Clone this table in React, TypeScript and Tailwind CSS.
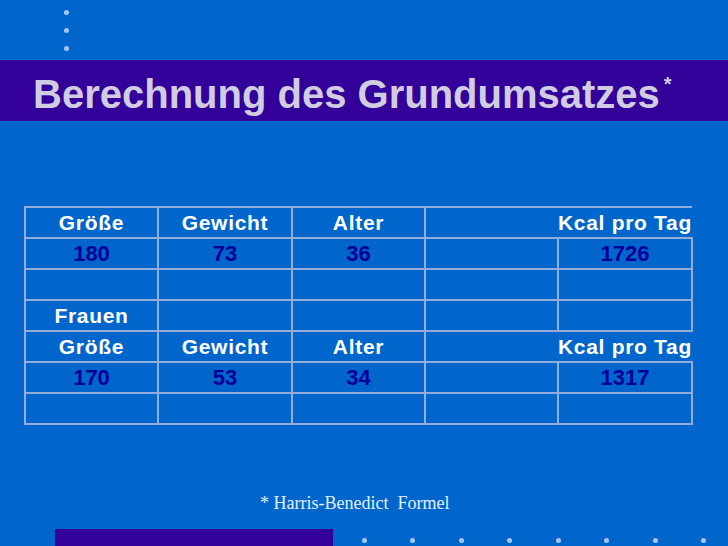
import React from "react";

const headCell =
  "border-2 border-[#93acd9] text-white font-bold text-[21px] tracking-[0.7px] leading-[27px] text-center p-0 whitespace-nowrap";
const valCell =
  "border-2 border-[#93acd9] text-[#000099] font-bold text-[22px] leading-[27px] text-center p-0";
const emptyCell = "border-2 border-[#93acd9] p-0";

function HeaderRow() {
  return (
    <tr className="h-[31px]">
      <td className={headCell}>Größe</td>
      <td className={headCell}>Gewicht</td>
      <td className={headCell}>Alter</td>
      <td colSpan={2} className={headCell + " !text-right !border-r-0"}>
        Kcal pro Tag
      </td>
    </tr>
  );
}

function ValueRow({ a, b, c, d }: { a: string; b: string; c: string; d: string }) {
  return (
    <tr className="h-[31px]">
      <td className={valCell}>{a}</td>
      <td className={valCell}>{b}</td>
      <td className={valCell}>{c}</td>
      <td className={emptyCell}></td>
      <td className={valCell}>{d}</td>
    </tr>
  );
}

function EmptyRow({ first }: { first?: string }) {
  return (
    <tr className="h-[31px]">
      <td className={first ? headCell : emptyCell}>{first}</td>
      <td className={emptyCell}></td>
      <td className={emptyCell}></td>
      <td className={emptyCell}></td>
      <td className={emptyCell}></td>
    </tr>
  );
}

export default function App() {
  return (
    <div
      className="w-[728px] h-[546px] bg-[#0066cc] overflow-hidden flex flex-col"
      style={{ fontFamily: '"Liberation Sans", Arial, sans-serif' }}
    >
      {/* top dots */}
      <div className="h-[60px] shrink-0 flex flex-col items-start pl-[63.5px] pt-[9.5px] gap-[13px]">
        <div className="w-[5px] h-[5px] rounded-full bg-[#a6c6ef]" />
        <div className="w-[5px] h-[5px] rounded-full bg-[#a6c6ef]" />
        <div className="w-[5px] h-[5px] rounded-full bg-[#a6c6ef]" />
      </div>

      {/* title band */}
      <div className="h-[61px] shrink-0 bg-[#330099] pl-[33px] pt-[7px] overflow-hidden">
        <h1 className="text-[40px] leading-[54px] font-bold text-[#d0cde2] whitespace-nowrap">
          Berechnung des Grundumsatzes
          <span className="text-[20px] leading-[0px] ml-[4px] align-[17px]">*</span>
        </h1>
      </div>

      {/* table */}
      <div className="pl-[24px] pt-[85px] shrink-0">
        <table className="table-fixed border-collapse w-[667px]">
          <colgroup>
            <col className="w-[133px]" />
            <col className="w-[134px]" />
            <col className="w-[133px]" />
            <col className="w-[133px]" />
            <col className="w-[134px]" />
          </colgroup>
          <tbody>
            <HeaderRow />
            <ValueRow a="180" b="73" c="36" d="1726" />
            <EmptyRow />
            <EmptyRow first="Frauen" />
            <HeaderRow />
            <ValueRow a="170" b="53" c="34" d="1317" />
            <EmptyRow />
          </tbody>
        </table>
      </div>

      {/* footnote */}
      <div className="pl-[260px] mt-[68px] shrink-0">
        <p
          className="text-[18px] leading-[21px] text-[#e3f0ff] whitespace-pre"
          style={{ fontFamily: '"Liberation Serif", "Times New Roman", serif' }}
        >
          * Harris-Benedict  Formel
        </p>
      </div>

      {/* bottom bar and dots */}
      <div className="flex flex-1 mt-[15px]">
        <div className="ml-[55px] w-[278px] bg-[#330099]" />
        <div className="ml-[6.75px] flex items-start pt-[8.5px]">
          {[0, 1, 2, 3, 4, 5, 6, 7].map((i) => (
            <div key={i} className="w-[48.5px] flex justify-center">
              <div className="w-[5px] h-[5px] rounded-full bg-[#a6c6ef]" />
            </div>
          ))}
        </div>
      </div>
    </div>
  );
}
